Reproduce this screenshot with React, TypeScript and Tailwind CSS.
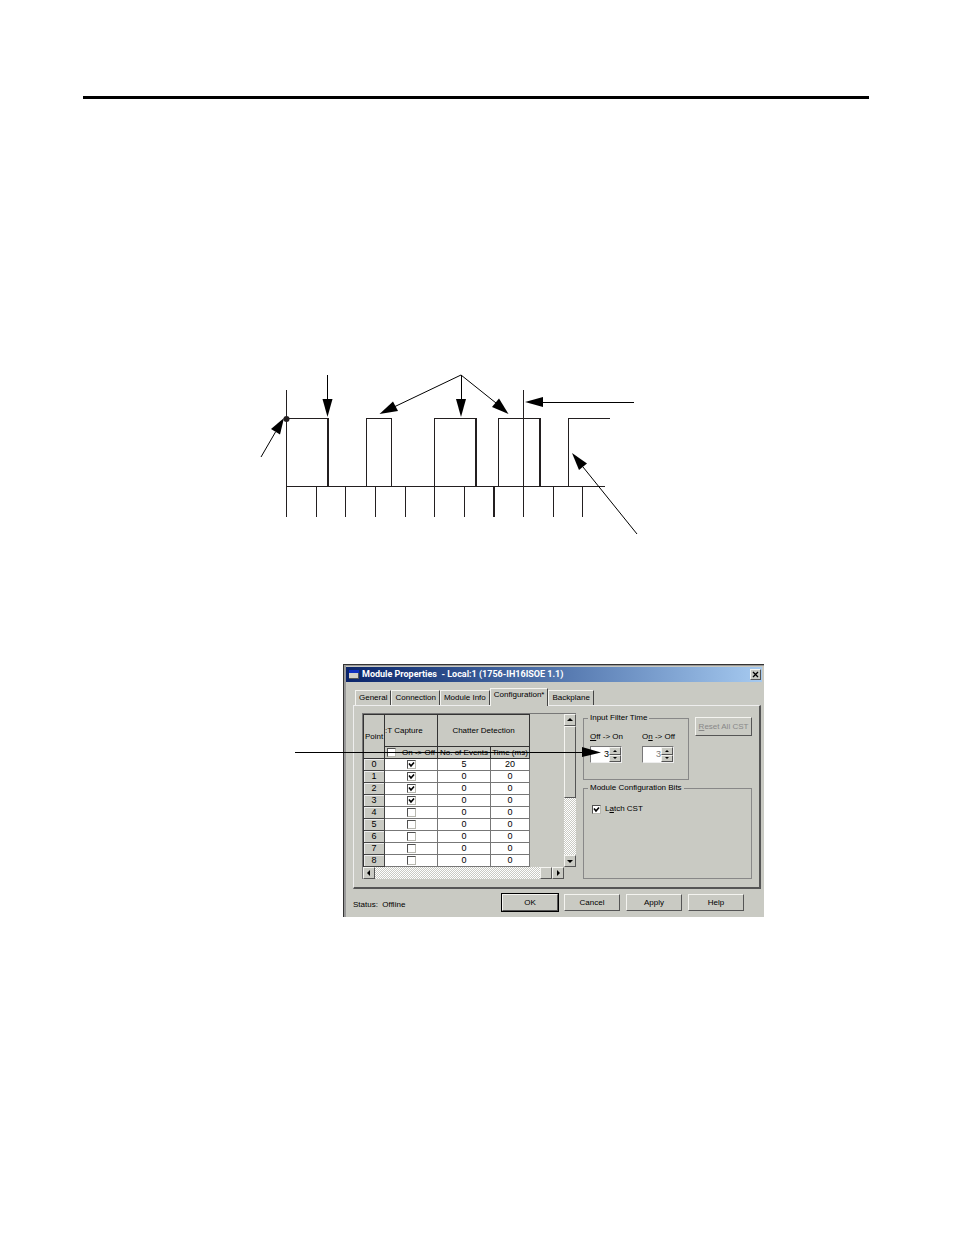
import React, { useState } from 'react';
import { clsx } from 'clsx';

interface PointRow {
  capture: boolean;
  events: number;
  time: number;
}

const initialRows: PointRow[] = [
  { capture: true, events: 5, time: 20 },
  { capture: true, events: 0, time: 0 },
  { capture: true, events: 0, time: 0 },
  { capture: true, events: 0, time: 0 },
  { capture: false, events: 0, time: 0 },
  { capture: false, events: 0, time: 0 },
  { capture: false, events: 0, time: 0 },
  { capture: false, events: 0, time: 0 },
  { capture: false, events: 0, time: 0 },
];

const tabs = ['General', 'Connection', 'Module Info', 'Configuration*', 'Backplane'];

const ticks = [316.5, 345.5, 375.5, 405.5, 464.5, 553.5, 582.5];

const TimingDiagram: React.FC = () => (
  <svg viewBox="255 370 390 170" className="block h-[170px] w-[390px]" role="img" aria-label="Timing diagram">
    <g fill="none" stroke="#231f20" strokeWidth="1" shapeRendering="crispEdges">
      <path d="M286.5 390V517M286 486.5H605M286 418.5H328" />
      <path d="M366.5 487V418.5H391.5V487" />
      <path d="M434.5 517V418.5H476" />
      <path d="M498.5 487V418.5H540M523.5 390V517" />
      <path d="M568.5 487V418.5H610" />
      {ticks.map((x) => (
        <path key={x} d={`M${x} 487V517`} />
      ))}
      <path strokeWidth="2" d="M328 418V487M476 418V487M540 418V487M494 487V517" />
    </g>
    <g stroke="#000" strokeWidth="1" fill="none">
      <path d="M327.5 375V400M461.5 375V400M634 402.5H543" />
      <path d="M461 375L395 406.5M461 375L496 403M261 457L275.5 432M637 534L583 467" />
    </g>
    <g fill="#000">
      <path d="M322.5 399H332.5L327.5 417Z" />
      <path d="M456 399H466L461 417Z" />
      <path d="M379.5 414L393 401.5L398 411Z" />
      <path d="M508.5 414L499 398.5L492 407Z" />
      <path d="M525 402L543 397V407Z" />
      <path d="M284 418L271 429L280 434.5Z" />
      <path d="M572 453L587 463.5L579 470Z" />
    </g>
    <circle cx="286.5" cy="419" r="3" fill="#231f20" />
  </svg>
);

const CheckBox: React.FC<{ id: string; label: string; checked: boolean; onChange: () => void }> = ({ id, label, checked, onChange }) => (
  <span className="relative block h-[9px] w-[9px] shrink-0">
    <input
      id={id}
      type="checkbox"
      aria-label={label}
      checked={checked}
      onChange={onChange}
      className="block h-[9px] w-[9px] appearance-none border border-t-[#505050] border-l-[#505050] border-r-[#b8b8b0] border-b-[#b8b8b0] bg-white"
    />
    {checked && (
      <svg viewBox="0 0 9 9" className="pointer-events-none absolute inset-0 h-[9px] w-[9px]">
        <path d="M2 3.5L4 6L7 2.5" fill="none" stroke="#000" strokeWidth="1.6" />
      </svg>
    )}
  </span>
);

const raised = 'border border-t-[#f4f4f0] border-l-[#f4f4f0] border-r-[#555] border-b-[#555] bg-[#c9cac3]';

const dither = 'bg-[repeating-conic-gradient(#c9cac3_0_25%,#ffffff_0_50%)] bg-[length:2px_2px]';

const arrows = {
  up: 'M1 5L4 2L7 5Z',
  down: 'M1 3L4 6L7 3Z',
  left: 'M5 1L2 4L5 7Z',
  right: 'M3 1L6 4L3 7Z',
};

const ScrollButton: React.FC<{ dir: keyof typeof arrows }> = ({ dir }) => (
  <button aria-label={`Scroll ${dir}`} className={clsx(raised, 'grid h-3 w-3 shrink-0 place-items-center')}>
    <svg viewBox="0 0 8 8" className="h-2 w-2">
      <path d={arrows[dir]} />
    </svg>
  </button>
);

const Spinner: React.FC<{ id: string; dim?: boolean; children: React.ReactNode }> = ({ id, dim, children }) => {
  const [value, setValue] = useState(3);
  return (
    <div className="w-8">
      <label htmlFor={id} className="block whitespace-nowrap text-center leading-3">{children}</label>
      <div className="mt-[3px] flex h-[17px] border border-t-[#777] border-l-[#777] border-r-[#eee] border-b-[#eee] bg-white">
        <input
          id={id}
          value={value}
          onChange={(e) => setValue(Number(e.target.value) || 0)}
          className={clsx('w-0 min-w-0 flex-1 text-right text-[9px] outline-none', dim && 'text-[#777]')}
        />
        <div className="flex w-3 flex-col">
          <button aria-label="Increase" onClick={() => setValue(value + 1)} className={clsx(raised, 'grid flex-1 place-items-center')}>
            <svg viewBox="0 0 4 2" className="h-[2px] w-1"><path d="M0 2L2 0L4 2Z" /></svg>
          </button>
          <button aria-label="Decrease" onClick={() => setValue(value - 1)} className={clsx(raised, 'grid flex-1 place-items-center')}>
            <svg viewBox="0 0 4 2" className="h-[2px] w-1"><path d="M0 0L2 2L4 0Z" /></svg>
          </button>
        </div>
      </div>
    </div>
  );
};

const PointTable: React.FC = () => {
  const [rows, setRows] = useState(initialRows);
  const [all, setAll] = useState(false);

  const toggleRow = (index: number) => {
    setRows(rows.map((row, i) => (i === index ? { ...row, capture: !row.capture } : row)));
  };

  const head = 'border-r border-b border-[#333] p-0 font-normal whitespace-nowrap';
  const cell = 'border-r border-b border-[#777] bg-white p-0 text-center';

  return (
    <table className="w-[167px] table-fixed border-separate border-spacing-0 border-t border-l border-[#333] leading-[11px]">
      <colgroup>
        <col className="w-[21px]" />
        <col className="w-[53px]" />
        <col className="w-[53px]" />
        <col className="w-[39px]" />
      </colgroup>
      <thead>
        <tr className="h-8">
          <th rowSpan={2} className={head}>Point</th>
          <th className={clsx(head, 'text-left')}>:T Capture</th>
          <th colSpan={2} className={head}>Chatter Detection</th>
        </tr>
        <tr className="h-3">
          <th className={head}>
            <label htmlFor="all" className="flex items-center justify-between px-[2px]">
              <CheckBox id="all" label="On to Off" checked={all} onChange={() => setAll(!all)} />
              <span>On -&gt; Off</span>
            </label>
          </th>
          <th className={head}>No. of Events</th>
          <th className={head}>Time (ms)</th>
        </tr>
      </thead>
      <tbody className="text-[9px]">
        {rows.map((row, i) => (
          <tr key={i} className="h-3">
            <th className="border-r border-b border-[#444] p-0 font-normal shadow-[inset_1px_1px_0_#eee]">{i}</th>
            <td className={cell}>
              <div className="flex justify-center">
                <CheckBox id={`point-${i}`} label={`Capture point ${i}`} checked={row.capture} onChange={() => toggleRow(i)} />
              </div>
            </td>
            <td className={cell}>{row.events}</td>
            <td className={cell}>{row.time}</td>
          </tr>
        ))}
      </tbody>
    </table>
  );
};

const ModuleDialog: React.FC = () => {
  const [activeTab, setActiveTab] = useState('Configuration*');
  const [latch, setLatch] = useState(true);

  return (
    <div className="border-t border-l border-[#333] bg-[#c9cac3] px-[2px] pb-[6px] pt-[2px] font-['Liberation_Sans',Arial,sans-serif] text-[8px] text-black shadow-[inset_2px_1px_0_#999]">
      <div className="flex h-[15px] items-center bg-linear-to-r from-[#0a246a] to-[#a6caf0] pl-[3px] pr-px">
        <svg viewBox="0 0 10 9" className="h-[9px] w-[10px]">
          <path d="M0 0H10V9H0Z" fill="#d4d0c8" />
          <path d="M0 0H10V3H0Z" fill="#1030c0" />
          <path d="M0 8.5H10M9.5 3V9" stroke="#555" />
        </svg>
        <h1 className="ml-[3px] flex-1 whitespace-pre font-['Roboto',sans-serif] text-[9px] font-bold text-white">{'Module Properties  - Local:1 (1756-IH16ISOE 1.1)'}</h1>
        <button aria-label="Close" className={clsx(raised, 'grid h-[11px] w-[11px] place-items-center')}>
          <svg viewBox="0 0 7 7" className="h-[7px] w-[7px]">
            <path d="M1 1L6 6M6 1L1 6" stroke="#000" strokeWidth="1.3" />
          </svg>
        </button>
      </div>

      <div className="pl-[7px] pr-px pt-[6px]">
        <div className="flex items-end pl-[2px]" role="tablist">
          {tabs.map((tab) => (
            <button
              key={tab}
              role="tab"
              aria-selected={tab === activeTab}
              onClick={() => setActiveTab(tab)}
              className={clsx(
                'whitespace-nowrap border-t border-r border-l border-t-[#f4f4f0] border-l-[#f4f4f0] border-r-[#444] px-[3px] leading-3',
                tab === activeTab ? 'relative -mb-px h-[18px] bg-[#c9cac3] pb-[5px]' : 'h-[15px]',
              )}
            >
              {tab}
            </button>
          ))}
        </div>

        <div className="flex justify-between border-2 border-t border-l border-t-[#eee] border-l-[#eee] border-r-[#555] border-b-[#555] pb-2 pl-2 pr-[7px] pt-[7px]">
          <div className="flex w-[214px] flex-col border-t border-l border-[#777]">
            <div className="flex h-[153px] justify-between">
              <PointTable />
              <div className={clsx(dither, 'flex w-3 flex-col')}>
                <ScrollButton dir="up" />
                <div className={clsx(raised, 'h-[72px]')} />
                <div className="flex-1" />
                <ScrollButton dir="down" />
              </div>
            </div>
            <div className="flex h-3">
              <div className={clsx(dither, 'flex flex-1 justify-end')}>
                <ScrollButton dir="left" />
                <div className="flex-1" />
                <div className={clsx(raised, 'w-3')} />
                <ScrollButton dir="right" />
              </div>
              <div className="w-3" />
            </div>
          </div>

          <div className="flex w-[169px] flex-col justify-between">
            <div className="flex justify-between">
              <fieldset className="h-[67px] w-[106px] border border-[#888] pl-1">
                <legend className="px-[2px] leading-[10px]">Input Filter Time</legend>
                <div className="flex gap-5 pl-[2px] pt-2">
                  <Spinner id="off-on"><u>O</u>ff -&gt; On</Spinner>
                  <Spinner id="on-off" dim>O<u>n</u> -&gt; Off</Spinner>
                </div>
              </fieldset>
              <button className={clsx(raised, 'mt-1 h-[19px] w-[57px] whitespace-nowrap text-[#888]')}>
                <u>R</u>eset All CST
              </button>
            </div>
            <fieldset className="h-24 border border-[#888] pl-1">
              <legend className="px-[2px] leading-[10px]">Module Configuration Bits</legend>
              <div className="flex items-center gap-1 pl-1 pt-[10px]">
                <CheckBox id="latch" label="Latch CST" checked={latch} onChange={() => setLatch(!latch)} />
                <label htmlFor="latch" className="leading-3">L<u>a</u>tch CST</label>
              </div>
            </fieldset>
          </div>
        </div>

        <div className="flex items-end justify-between pr-[17px] pt-[5px]">
          <p className="leading-3">Status:&nbsp; Offline</p>
          <div className="flex gap-[6px]">
            {['OK', 'Cancel', 'Apply', 'Help'].map((name) => (
              <button
                key={name}
                className={clsx(raised, 'h-[17px] w-14 leading-3', name === 'OK' && 'outline outline-black')}
              >
                {name}
              </button>
            ))}
          </div>
        </div>
      </div>
    </div>
  );
};

const App: React.FC = () => {
  return (
    <div className="min-h-screen bg-white pl-[83px] pr-[85px] pt-24">
      <hr className="border-0 border-t-3 border-black" />

      <div className="mt-[271px] pl-[172px]">
        <TimingDiagram />
      </div>

      <div className="mt-[124px] pl-[260px] pr-[105px]">
        <div className="relative">
          <ModuleDialog />
          <svg viewBox="0 0 307 10" className="pointer-events-none absolute top-[83px] -left-12 h-[10px] w-[307px]">
            <path d="M0 5.5H290" stroke="#000" shapeRendering="crispEdges" />
            <path d="M287 0L306 5.5L287 10Z" />
          </svg>
        </div>
      </div>
    </div>
  );
};

export default App;
